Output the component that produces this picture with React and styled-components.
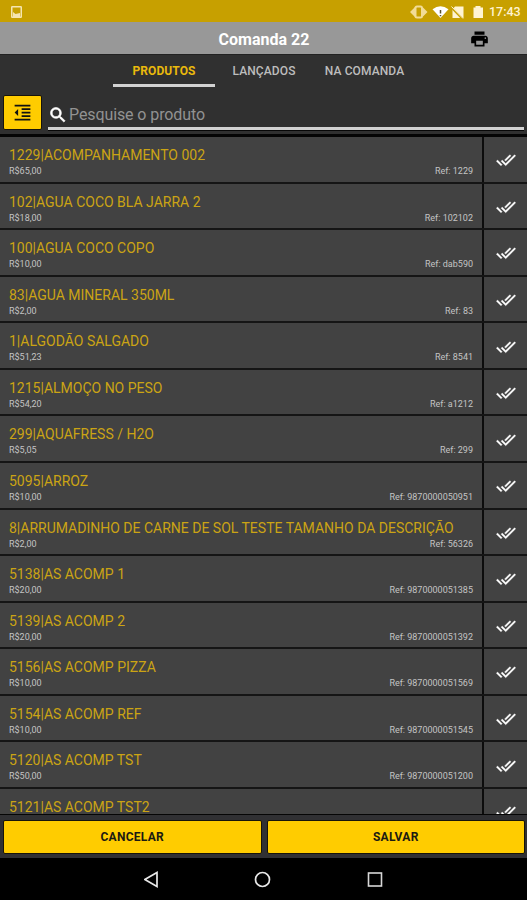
import React from 'react';
import styled, { createGlobalStyle } from 'styled-components';
import { MdDoneAll, MdFormatIndentDecrease, MdPrint, MdSearch } from 'react-icons/md';

const GlobalStyle = createGlobalStyle`
    * {
        box-sizing: border-box;
    }

    body {
        margin: 0;
        background: #000;
        font-family: Roboto, "Liberation Sans", sans-serif;
    }
`;

const Screen = styled.div`
    display: flex;
    flex-direction: column;
    height: 900px;
    overflow: hidden;
    background: #303030;
`;

const StatusBar = styled.div`
    display: flex;
    flex: none;
    align-items: center;
    justify-content: space-between;
    height: 22px;
    padding: 1px 6px 0 11px;
    background: #c7a000;

    svg {
        display: block;
    }
`;

const StatusIcons = styled.div`
    display: flex;
    align-items: center;
`;

const Clock = styled.span`
    margin-left: 5px;
    width: 32px;
    color: #fff3d0;
    font-size: 12.5px;
    font-weight: 500;
    line-height: 22px;
    white-space: nowrap;
`;

const TitleBar = styled.header`
    display: grid;
    flex: none;
    grid-template-columns: 1fr auto 1fr;
    align-items: center;
    height: 33px;
    padding: 2px 37px 0 38px;
    border-bottom: 1px solid #222;
    background: #989898;
`;

const Title = styled.h1`
    grid-column: 2;
    margin: 0;
    padding-top: 2px;
    color: #fff;
    font-size: 16px;
    font-weight: 700;
    line-height: 20px;
`;

const PrintIcon = styled(MdPrint)`
    justify-self: end;
    width: 21px;
    height: 20px;
    color: #000;
`;

const Tabs = styled.nav`
    display: flex;
    flex: none;
    height: 32px;
    padding-left: 113px;
`;

const Tab = styled.div`
    width: ${({ $width }) => $width}px;
    height: 32px;
    border-bottom: 3px solid ${({ $active }) => ($active ? '#d2d2d2' : 'transparent')};
    color: ${({ $active }) => ($active ? '#e9b90c' : '#bdbdbd')};
    font-size: 12px;
    font-weight: ${({ $active }) => ($active ? 700 : 500)};
    letter-spacing: 0.1px;
    line-height: 33px;
    text-align: center;
    white-space: nowrap;
`;

const SearchRow = styled.div`
    display: flex;
    flex: none;
    align-items: flex-start;
    gap: 6px;
    height: 47px;
    padding: 8px 3px 0 3px;
`;

const FilterButton = styled.button`
    display: flex;
    align-items: center;
    justify-content: center;
    width: 39px;
    height: 35px;
    padding: 0;
    border: 1px solid #17140a;
    border-radius: 2px;
    background: #ffcc00;
    color: #111;
    font-size: 21px;
`;

const SearchField = styled.div`
    display: flex;
    flex: 1;
    align-items: center;
    height: 35px;
    padding-top: 7px;
    border-bottom: 3px solid #d2d2d2;
    box-shadow: 0 1px 0 #080808;
    color: #929292;
    font-size: 16px;
    letter-spacing: -0.1px;

    svg {
        width: 20px;
        height: 20px;
        margin: 1px 1px 0 0;
        color: #fff;
    }

    path:not([fill="none"]) {
        stroke-width: 0.8px;
    }
`;

const List = styled.main`
    flex: 1;
    min-height: 0;
    overflow: hidden;
    border-top: 3px solid #050505;
    border-bottom: 1px solid #050505;
    background: #424242;
`;

const Row = styled.div`
    display: flex;
    height: 46.57px;
    border-bottom: 2px solid #151515;
`;

const Product = styled.div`
    flex: 1;
    min-width: 0;
    padding: 9px 9px 0;
`;

const Name = styled.div`
    color: #cba414;
    font-size: 14px;
    line-height: 19px;
    white-space: nowrap;
`;

const Details = styled.div`
    display: flex;
    justify-content: space-between;
    color: #c4c4c4;
    font-size: 9px;
    line-height: 12px;
`;

const Check = styled.div`
    display: flex;
    align-items: center;
    justify-content: center;
    width: 45px;
    padding-top: 2px;
    border-left: 2px solid #0c0c0c;
    color: #fff;
    font-size: 20px;

    path:not([fill="none"]) {
        stroke-width: 0.4px;
    }
`;

const Actions = styled.footer`
    display: grid;
    flex: none;
    grid-template-columns: 1fr 1fr;
    gap: 5px;
    height: 43px;
    padding: 5px 2px 4px 3px;
    background: #303033;
`;

const ActionButton = styled.button`
    border: 1px solid #17140a;
    border-radius: 2px;
    background: #ffcc00;
    color: #1c1a12;
    font-family: inherit;
    font-size: 12px;
    font-weight: 700;
    letter-spacing: 0.3px;
`;

const NavBar = styled.div`
    display: flex;
    flex: none;
    justify-content: center;
    gap: 94px;
    height: 42px;
    padding: 12px 0 0;
    background: #000;
`;

const tabs = [
    { label: 'PRODUTOS', width: 102, active: true },
    { label: 'LANÇADOS', width: 98 },
    { label: 'NA COMANDA', width: 103 },
];

const products = [
    ['1229|ACOMPANHAMENTO 002', 'R$65,00', '1229'],
    ['102|AGUA COCO BLA JARRA 2', 'R$18,00', '102102'],
    ['100|AGUA COCO COPO', 'R$10,00', 'dab590'],
    ['83|AGUA MINERAL 350ML', 'R$2,00', '83'],
    ['1|ALGODÃO SALGADO', 'R$51,23', '8541'],
    ['1215|ALMOÇO NO PESO', 'R$54,20', 'a1212'],
    ['299|AQUAFRESS / H2O', 'R$5,05', '299'],
    ['5095|ARROZ', 'R$10,00', '9870000050951'],
    ['8|ARRUMADINHO DE CARNE DE SOL TESTE TAMANHO DA DESCRIÇÃO', 'R$2,00', '56326'],
    ['5138|AS ACOMP 1', 'R$20,00', '9870000051385'],
    ['5139|AS ACOMP 2', 'R$20,00', '9870000051392'],
    ['5156|AS ACOMP PIZZA', 'R$10,00', '9870000051569'],
    ['5154|AS ACOMP REF', 'R$10,00', '9870000051545'],
    ['5120|AS ACOMP TST', 'R$50,00', '9870000051200'],
    ['5121|AS ACOMP TST2'],
];

const ImageIcon = () => (
    <svg width="11" height="12" viewBox="0 0 11 12">
        <rect x="0.75" y="0.75" width="9.5" height="10.5" rx="0.5" fill="none" stroke="#f5e5b0" strokeWidth="1.5" />
        <path d="M2 6l2.5 2L9 7v4H2z" fill="#f5e5b0" />
    </svg>
);

const StatusSymbols = () => (
    <svg width="76" height="16" viewBox="0 0 76 16">
        {/* vibrate */}
        <path d="M2 8l5-5v10z M19.5 8l-5-5v10z" fill="#f2dc96" />
        <rect x="7.5" y="2.5" width="6.5" height="11" rx="1.5" fill="#c7a000" stroke="#f2dc96" strokeWidth="2" />
        {/* wifi */}
        <path d="M24.5 5.3Q32.5 -0.6 40.5 5.3L32.5 14z" fill="#fff" />
        <path d="M32.5 6v3.5 M32.5 11v1.2" stroke="#59512c" strokeWidth="1.5" />
        {/* no sim */}
        <path d="M47 2.5h8.5V14H44.5V5.5z" fill="#fff4d3" />
        <path d="M44 4l11.5 12" stroke="#c7a000" strokeWidth="2" />
        <path d="M43.5 2.5l11.5 12" stroke="#fff4d3" strokeWidth="1" />
        {/* battery */}
        <path d="M67.5 2h5v1.5H75V14h-9.5V3.5h2z" fill="#fff4d3" />
    </svg>
);

const BackIcon = () => (
    <svg width="16" height="19" viewBox="0 0 16 19">
        <path d="M0.8 9.5L13 2.5v14z" fill="none" stroke="#e8e8e8" strokeWidth="1.7" />
    </svg>
);

const HomeIcon = () => (
    <svg width="18" height="19" viewBox="0 0 18 19">
        <circle cx="8.5" cy="9.5" r="7" fill="none" stroke="#e8e8e8" strokeWidth="1.7" />
    </svg>
);

const RecentIcon = () => (
    <svg width="18" height="19" viewBox="0 0 18 19">
        <rect x="2.5" y="3" width="13" height="13" fill="none" stroke="#d8d8d8" strokeWidth="1.6" />
    </svg>
);

const App = () => {
    return (
        <>
            <GlobalStyle />
            <Screen>
                <StatusBar>
                    <ImageIcon />
                    <StatusIcons>
                        <StatusSymbols />
                        <Clock>17:43</Clock>
                    </StatusIcons>
                </StatusBar>

                <TitleBar>
                    <Title>Comanda 22</Title>
                    <PrintIcon />
                </TitleBar>

                <Tabs>
                    {tabs.map((tab) => (
                        <Tab key={tab.label} $width={tab.width} $active={tab.active}>
                            {tab.label}
                        </Tab>
                    ))}
                </Tabs>

                <SearchRow>
                    <FilterButton>
                        <MdFormatIndentDecrease />
                    </FilterButton>
                    <SearchField>
                        <MdSearch />
                        Pesquise o produto
                    </SearchField>
                </SearchRow>

                <List>
                    {products.map(([name, price, code]) => (
                        <Row key={name}>
                            <Product>
                                <Name>{name}</Name>
                                {price && (
                                    <Details>
                                        <span>{price}</span>
                                        <span>Ref: {code}</span>
                                    </Details>
                                )}
                            </Product>
                            <Check>
                                <MdDoneAll />
                            </Check>
                        </Row>
                    ))}
                </List>

                <Actions>
                    <ActionButton>CANCELAR</ActionButton>
                    <ActionButton>SALVAR</ActionButton>
                </Actions>

                <NavBar>
                    <BackIcon />
                    <HomeIcon />
                    <RecentIcon />
                </NavBar>
            </Screen>
        </>
    );
};

export default App;
